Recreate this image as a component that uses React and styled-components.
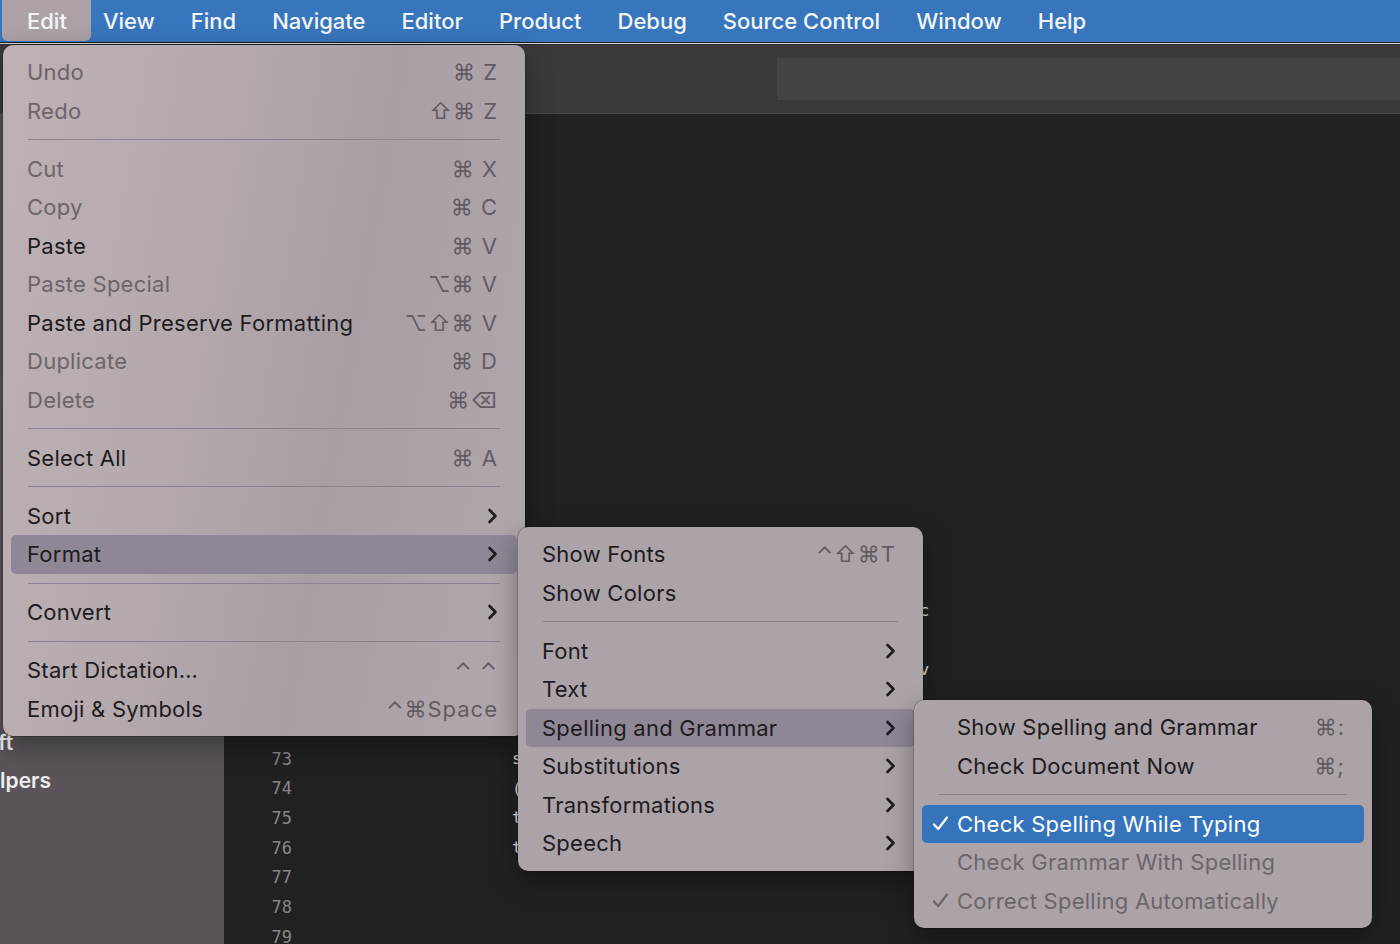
import React from "react";
import styled, { createGlobalStyle, css } from "styled-components";

const GlobalStyle = createGlobalStyle`
  html, body {
    margin: 0;
    padding: 0;
    background: #212121;
  }
  body {
    font-family: "Inter", "DejaVu Sans", sans-serif;
    overflow: hidden;
  }
`;

const Screen = styled.div`
  position: relative;
  width: 1400px;
  height: 944px;
  overflow: hidden;
  display: flex;
  flex-direction: column;
  background: #212121;
`;

const MenuBar = styled.div`
  flex: none;
  height: 42px;
  display: flex;
  align-items: center;
  padding-left: 9px;
  background: #3775bc;
  border-bottom: 1px solid #1c1c1e;
`;

const BarItem = styled.div`
  position: relative;
  height: 100%;
  display: flex;
  align-items: center;
  padding: 0 18px;
  color: #f3f5f9;
  font-size: 22px;
  font-weight: 500;

  ${(p) =>
    p.$open &&
    css`
      &::before {
        content: "";
        position: absolute;
        top: 0;
        bottom: 1px;
        left: -7px;
        right: -6px;
        background: #aba1a7;
        border-radius: 0 0 6px 6px;
      }
    `}

  span {
    position: relative;
  }
`;

const Rule = styled.div`
  flex: none;
  height: 1px;
  background: #dadada;
`;

const Toolbar = styled.div`
  flex: none;
  height: 68px;
  display: flex;
  align-items: center;
  justify-content: flex-end;
  background: #3b393a;
  border-top: 1px solid #2a2929;
  border-bottom: 1px solid #4b494a;
`;

const StatusField = styled.div`
  width: 623px;
  height: 42px;
  background: #454344;
`;

const Body = styled.div`
  flex: 1;
  display: flex;
  min-height: 0;
`;

const Sidebar = styled.div`
  flex: none;
  width: 224px;
  overflow: hidden;
  background: #5a545a;
`;

const SideList = styled.div`
  margin-left: -37px;
  padding-top: 609px;
`;

const SideRow = styled.div`
  height: 38px;
  display: flex;
  align-items: center;
  padding-left: ${(p) => p.$depth * 9}px;
  color: #eeeeee;
  font-size: 21px;
  font-weight: 600;
  white-space: nowrap;
`;

const Editor = styled.div`
  flex: 1;
  padding-top: 7px;
  overflow: hidden;
  font-family: "DejaVu Sans Mono", "Liberation Mono", monospace;
`;

const Line = styled.div`
  height: 29.67px;
  display: flex;
  align-items: center;
`;

const LineNo = styled.span`
  flex: none;
  width: 68px;
  text-align: right;
  color: #878787;
  font-size: 17px;
`;

const Code = styled.span`
  padding-left: 220px;
  color: #e2e2e2;
  font-size: 16.5px;
  white-space: pre;
`;

const Menu = styled.div`
  position: absolute;
  left: ${(p) => p.$x}px;
  top: ${(p) => p.$y}px;
  width: ${(p) => p.$w}px;
  padding: 8px 0;
  border-radius: 10px;
  background: ${(p) => p.$bg};
  box-shadow: 0 10px 28px rgba(0, 0, 0, 0.35), 0 0 0 0.5px rgba(0, 0, 0, 0.35);
`;

const Row = styled.div`
  height: 38.5px;
  margin: 0 8px;
  padding: 0 19px 0 ${(p) => (p.$checks ? 10 : 16)}px;
  display: flex;
  align-items: center;
  border-radius: 5px;
  font-size: 22px;
  letter-spacing: 0.25px;
  white-space: nowrap;
  color: ${(p) =>
    p.$active === "blue" ? "#ffffff" : p.$disabled ? "#6c656a" : "#1e1b1e"};
  background: ${(p) =>
    p.$active === "gray"
      ? "#8f8796"
      : p.$active === "blue"
      ? "#3574bb"
      : "transparent"};
`;

const CheckCell = styled.span`
  flex: none;
  width: 25px;
  display: flex;
  align-items: center;
`;

const Keys = styled.span`
  margin-left: auto;
  color: #625b61;
  letter-spacing: 1px;
`;

const Chevron = styled.svg`
  margin-left: auto;
  flex: none;
  color: #1e1b1e;
`;

const Sep = styled.div`
  height: 19.5px;
  margin: 0 25px;
  display: flex;
  align-items: center;

  &::after {
    content: "";
    flex: 1;
    height: 1px;
    background: #8a8290;
  }
`;

const barItems = [
  "Edit",
  "View",
  "Find",
  "Navigate",
  "Editor",
  "Product",
  "Debug",
  "Source Control",
  "Window",
  "Help",
];

const sideItems = [
  ["Draft", 0],
  ["Helpers", 1],
];

const code = {
  68: "tableView.register(UITableViewCell.self, c",
  69: "tableView.rowHeight = 44",
  70: "tableView.separatorStyle = .singleLine;  v",
  71: "tableView.dataSource = self",
  72: "tableView.delegate = self",
  73: "super.viewDidLoad()",
  74: "(navigationController as? NavController)?.setup()",
  75: "title = \"Notes\"",
  76: "tableView.reloadData()",
};

const editMenu = [
  { label: "Undo", keys: "⌘ Z", disabled: true },
  { label: "Redo", keys: "⇧⌘ Z", disabled: true },
  { sep: true },
  { label: "Cut", keys: "⌘ X", disabled: true },
  { label: "Copy", keys: "⌘ C", disabled: true },
  { label: "Paste", keys: "⌘ V" },
  { label: "Paste Special", keys: "⌥⌘ V", disabled: true },
  { label: "Paste and Preserve Formatting", keys: "⌥⇧⌘ V" },
  { label: "Duplicate", keys: "⌘ D", disabled: true },
  { label: "Delete", keys: "⌘⌫", disabled: true },
  { sep: true },
  { label: "Select All", keys: "⌘ A" },
  { sep: true },
  { label: "Sort", sub: true },
  { label: "Format", sub: true, active: "gray" },
  { sep: true },
  { label: "Convert", sub: true },
  { sep: true },
  { label: "Start Dictation…", keys: "⌃ ⌃" },
  { label: "Emoji & Symbols", keys: "⌃⌘Space" },
];

const formatMenu = [
  { label: "Show Fonts", keys: "⌃⇧⌘T" },
  { label: "Show Colors" },
  { sep: true },
  { label: "Font", sub: true },
  { label: "Text", sub: true },
  { label: "Spelling and Grammar", sub: true, active: "gray" },
  { label: "Substitutions", sub: true },
  { label: "Transformations", sub: true },
  { label: "Speech", sub: true },
];

const spellingMenu = [
  { label: "Show Spelling and Grammar", keys: "⌘:" },
  { label: "Check Document Now", keys: "⌘;" },
  { sep: true },
  { label: "Check Spelling While Typing", checked: true, active: "blue" },
  { label: "Check Grammar With Spelling", disabled: true },
  { label: "Correct Spelling Automatically", checked: true, disabled: true },
];

const Arrow = () => (
  <Chevron width="11" height="16" viewBox="0 0 11 16">
    <path
      d="M2.5 2 L8.5 8 L2.5 14"
      fill="none"
      stroke="currentColor"
      strokeWidth="2.6"
      strokeLinecap="round"
      strokeLinejoin="round"
    />
  </Chevron>
);

const Tick = () => (
  <svg width="17" height="17" viewBox="0 0 17 17">
    <path
      d="M2 9.5 L6.2 14 L15 2.5"
      fill="none"
      stroke="currentColor"
      strokeWidth="2.2"
      strokeLinecap="round"
      strokeLinejoin="round"
    />
  </svg>
);

const MenuItems = ({ items, checks }) =>
  items.map((it, i) =>
    it.sep ? (
      <Sep key={i} />
    ) : (
      <Row key={i} $checks={checks} $disabled={it.disabled} $active={it.active}>
        {checks && <CheckCell>{it.checked && <Tick />}</CheckCell>}
        <span>{it.label}</span>
        {it.keys && <Keys>{it.keys}</Keys>}
        {it.sub && <Arrow />}
      </Row>
    )
  );

const lines = [];
for (let n = 52; n <= 79; n++) lines.push(n);

export default function App() {
  return (
    <Screen>
      <GlobalStyle />
      <MenuBar>
        {barItems.map((name, i) => (
          <BarItem key={name} $open={i === 0}>
            <span>{name}</span>
          </BarItem>
        ))}
      </MenuBar>
      <Rule />
      <Toolbar>
        <StatusField />
      </Toolbar>
      <Body>
        <Sidebar>
          <SideList>
            {sideItems.map(([name, depth]) => (
              <SideRow key={name} $depth={depth}>
                {name}
              </SideRow>
            ))}
          </SideList>
        </Sidebar>
        <Editor>
          {lines.map((n) => (
            <Line key={n}>
              <LineNo>{n}</LineNo>
              <Code>{code[n] || ""}</Code>
            </Line>
          ))}
        </Editor>
      </Body>

      <Menu
        $x={3}
        $y={45}
        $w={522}
        $bg="linear-gradient(100deg, #bdb1b4 0%, #b4aaad 35%, #a89fa5 62%, #b1a8ac 100%)"
      >
        <MenuItems items={editMenu} />
      </Menu>
      <Menu $x={518} $y={527} $w={405} $bg="#aca3a8">
        <MenuItems items={formatMenu} />
      </Menu>
      <Menu $x={914} $y={700} $w={458} $bg="#aba3a7">
        <MenuItems items={spellingMenu} checks />
      </Menu>
    </Screen>
  );
}
